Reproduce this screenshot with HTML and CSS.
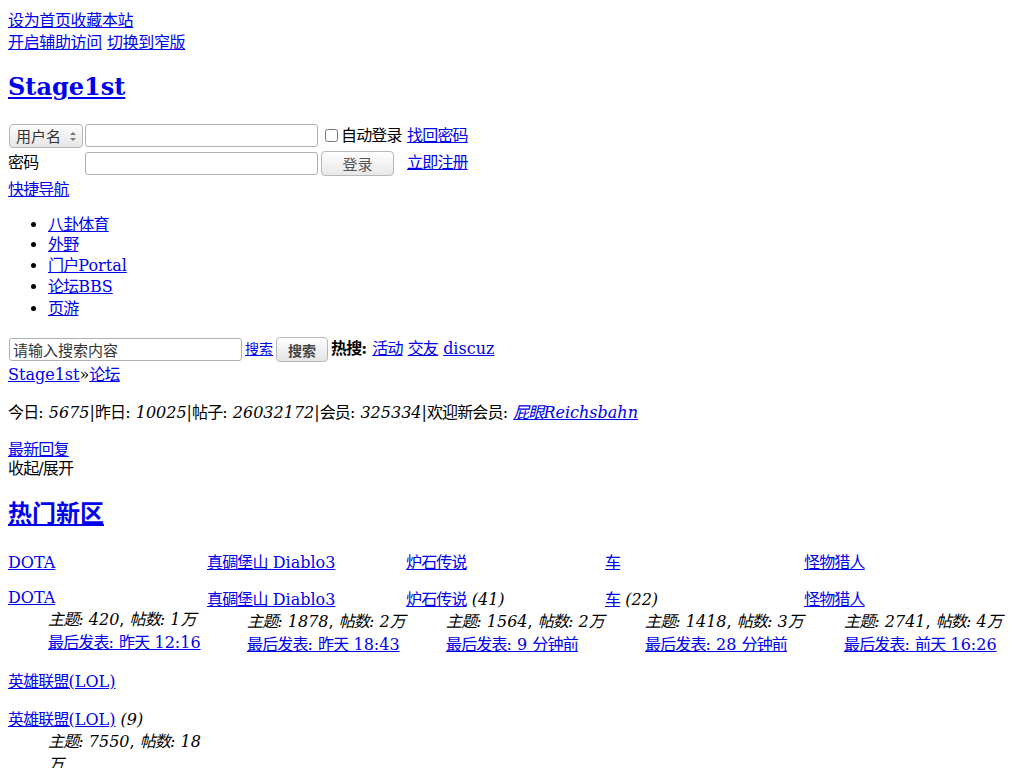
FILE: index.html
```html
<!DOCTYPE html>
<html lang="zh-CN">
<head>
<meta charset="utf-8">
<title>论坛 - Stage1st</title>
<link rel="stylesheet" href="styles.css">
</head>
<body>
<div class="toplinks first"><a href="#"><span class="z">设为首页</span></a><a href="#"><span class="z">收藏本站</span></a></div>
<div class="toplinks"><a href="#"><span class="z">开启辅助访问</span></a> <a href="#"><span class="z">切换到窄版</span></a></div>
<h2 class="logo"><a href="#">Stage1st</a></h2>

<table class="login">
  <tr class="r1">
    <td class="c1"><span class="selwrap"><select class="sel"><option>用户名</option></select><span class="arrows"><i class="up"></i><i class="dn"></i></span></span></td>
    <td class="c2"><input class="px" type="text"></td>
    <td class="c3"><label class="auto"><input type="checkbox" class="cb"><span class="z">自动登录</span></label></td>
    <td class="c4">&nbsp;<a href="#"><span class="z">找回密码</span></a></td>
  </tr>
  <tr class="r2">
    <td class="c1"><label class="pwl z">密码</label></td>
    <td class="c2"><input class="px" type="password"></td>
    <td class="c3"><button class="btn-login" type="button">登录</button></td>
    <td class="c4">&nbsp;<a href="#"><span class="z">立即注册</span></a></td>
  </tr>
</table>
<div class="quick"><a href="#"><span class="z">快捷导航</span></a></div>

<ul class="nav">
  <li class="n20"><a href="#"><span class="z">八卦体育</span></a></li>
  <li class="n20"><a href="#"><span class="z">外野</span></a></li>
  <li class="n21"><a href="#"><span class="z">门户</span>Portal</a></li>
  <li class="n22"><a href="#"><span class="z">论坛</span>BBS</a></li>
  <li class="n22"><a href="#"><span class="z">页游</span></a></li>
</ul>

<div class="search">
  <input class="skw" type="text" value="请输入搜索内容"><a class="slink" href="#">搜索</a><button class="btn-search" type="button">搜索</button><strong class="hot"><span class="z">热搜</span>:</strong> <a href="#"><span class="z">活动</span></a> <a href="#"><span class="z">交友</span></a> <a href="#">discuz</a>
</div>
<div class="crumb"><a href="#">Stage1st</a>»<a href="#"><span class="z">论坛</span></a></div>

<p class="stats"><span class="z">今日</span>: <em>5675</em>|<span class="z">昨日</span>: <em>10025</em>|<span class="z">帖子</span>: <em>26032172</em>|<span class="z">会员</span>: <em>325334</em>|<span class="z">欢迎新会员</span>: <em><a href="#"><span class="z">屁眼</span>Reichsbahn</a></em></p>

<p class="latest"><a href="#"><span class="z">最新回复</span></a><br><span class="z">收起/展开</span></p>

<h2 class="cat"><a href="#">热门新区</a></h2>

<table class="fl">
  <tr class="row1">
    <td class="fl-g">
      <div class="icn"><a href="#">DOTA</a></div>
      <dl class="first"><dt><a href="#">DOTA</a></dt><dd class="nw"><em><span class="z">主题</span>: 420</em>, <em><span class="z">帖数</span>: 1<span class="z">万</span></em></dd><dd><a href="#"><span class="z">最后发表</span>: <span class="z">昨天</span> 12:16</a></dd></dl>
    </td>
    <td class="fl-g">
      <div class="icn"><a href="#"><span class="z">真碉堡山</span> Diablo3</a></div>
      <dl><dt><a href="#"><span class="z">真碉堡山</span> Diablo3</a></dt><dd class="nw"><em><span class="z">主题</span>: 1878</em>, <em><span class="z">帖数</span>: 2<span class="z">万</span></em></dd><dd><a href="#"><span class="z">最后发表</span>: <span class="z">昨天</span> 18:43</a></dd></dl>
    </td>
    <td class="fl-g">
      <div class="icn"><a href="#"><span class="z">炉石传说</span></a></div>
      <dl><dt><a href="#"><span class="z">炉石传说</span></a> <em>(41)</em></dt><dd class="nw"><em><span class="z">主题</span>: 1564</em>, <em><span class="z">帖数</span>: 2<span class="z">万</span></em></dd><dd><a href="#"><span class="z">最后发表</span>: 9 <span class="z">分钟前</span></a></dd></dl>
    </td>
    <td class="fl-g">
      <div class="icn"><a href="#"><span class="z">车</span></a></div>
      <dl><dt><a href="#"><span class="z">车</span></a> <em>(22)</em></dt><dd class="nw"><em><span class="z">主题</span>: 1418</em>, <em><span class="z">帖数</span>: 3<span class="z">万</span></em></dd><dd><a href="#"><span class="z">最后发表</span>: 28 <span class="z">分钟前</span></a></dd></dl>
    </td>
    <td class="fl-g">
      <div class="icn"><a href="#"><span class="z">怪物猎人</span></a></div>
      <dl><dt><a href="#"><span class="z">怪物猎人</span></a></dt><dd class="nw"><em><span class="z">主题</span>: 2741</em>, <em><span class="z">帖数</span>: 4<span class="z">万</span></em></dd><dd><a href="#"><span class="z">最后发表</span>: <span class="z">前天</span> 16:26</a></dd></dl>
    </td>
  </tr>
  <tr class="row2">
    <td class="fl-g">
      <div class="icn"><a href="#"><span class="z">英雄联盟</span>(LOL)</a></div>
      <dl><dt><a href="#"><span class="z">英雄联盟</span>(LOL)</a> <em>(9)</em></dt><dd><em><span class="z">主题</span>: 7550</em>, <em><span class="z">帖数</span>: 18 <span class="z">万</span></em></dd><dd><a href="#"><span class="z">最后发表</span>: 1 <span class="z">分钟前</span></a></dd></dl>
    </td>
    <td class="fl-g"></td>
    <td class="fl-g"></td>
    <td class="fl-g"></td>
    <td class="fl-g"></td>
  </tr>
</table>
</body>
</html>
```

FILE: styles.css
```css
body {
  margin: 8px;
  font-family: "DejaVu Serif", "Noto Sans CJK SC", serif;
  font-size: 16px;
  line-height: 22px;
  color: #000;
  background: #fff;
}
a { color: #0000ee; }
.z { letter-spacing: -0.85px; }

.toplinks { height: 22px; }
.toplinks.first { padding-top: 2px; }
.toplinks .z { letter-spacing: -0.35px; }

h2 { font-size: 24px; font-weight: bold; margin: 20px 0; }
.logo { line-height: 30px; margin-top: 18px; }

.login { border-collapse: collapse; border-spacing: 0; }
.login td { padding: 0; vertical-align: middle; }
.login .r1 td { height: 27px; }
.login .r2 td { height: 28px; }
.login .c1 { width: 76px; }
.login .c3 { width: 81px; white-space: nowrap; }

.selwrap { position: relative; display: inline-block; margin-left: 1px; vertical-align: middle; }
.sel {
  -webkit-appearance: none;
  appearance: none;
  display: block;
  width: 74px;
  height: 24px;
  box-sizing: border-box;
  margin: 0;
  padding: 0 0 0 6px;
  border: 1px solid #b4b4b4;
  border-radius: 4px;
  background: linear-gradient(#fdfdfd, #e6e6e6);
  font-family: "Noto Sans CJK SC", sans-serif;
  font-size: 15px;
  color: #333;
}
.arrows { position: absolute; right: 7px; top: 8px; width: 6px; height: 10px; }
.arrows i { position: absolute; left: 0; width: 0; height: 0; border-left: 3px solid transparent; border-right: 3px solid transparent; }
.arrows .up { top: 0; border-bottom: 3px solid #777; }
.arrows .dn { top: 6px; border-top: 3px solid #777; }

.px {
  width: 233px;
  height: 23px;
  box-sizing: border-box;
  margin: 0 3px 0 1px;
  border: 1px solid #b0b0b0;
  border-radius: 3px;
  padding: 1px 4px;
  font-size: 14px;
  vertical-align: middle;
  background: #fff;
}
.auto { white-space: nowrap; }
.cb { margin: 0 3px 0 4px; width: 13px; height: 13px; vertical-align: -1px; }

.btn-login {
  width: 73px;
  height: 25px;
  margin: 0;
  padding: 0;
  border: 1px solid #b8b8b8;
  border-radius: 4px;
  background: linear-gradient(#fefefe, #e8e8e8);
  font-family: "Noto Sans CJK SC", sans-serif;
  font-size: 15px;
  color: #555;
  vertical-align: middle;
}

.quick { height: 22px; padding-top: 2px; }

.nav { margin: 14px 0 15px; padding-left: 40px; }
.nav .n20 { line-height: 20px; }
.nav .n21 { line-height: 21px; }
.nav .n22 { line-height: 22px; }

.search { height: 27px; line-height: 27px; white-space: nowrap; }
.skw {
  width: 233px;
  height: 23px;
  box-sizing: border-box;
  margin: 0 0 0 1px;
  padding: 1px 3px;
  border: 1px solid #b0b0b0;
  border-radius: 3px;
  font-family: "Noto Sans CJK SC", sans-serif;
  font-size: 15px;
  color: #333;
  vertical-align: middle;
}
.slink { margin-left: 3px; font-family: "Noto Sans CJK SC", sans-serif; font-size: 14px; }
.btn-search {
  width: 52px;
  height: 25px;
  margin: 0 0 0 3px;
  padding: 0;
  border: 1px solid #b8b8b8;
  border-radius: 4px;
  background: linear-gradient(#fefefe, #e4e4e4);
  font-family: "Noto Sans CJK SC", sans-serif;
  font-size: 14px;
  font-weight: bold;
  color: #444;
  vertical-align: middle;
}
.hot { margin-left: 3px; }

.crumb { height: 22px; padding-top: 2px; }

.stats { margin: 16px 0 16px; }
.latest { margin: 14px 0 16px; line-height: 19px; }

.cat { line-height: 30px; margin: 21px 0 23px; }

.fl { border-collapse: collapse; border-spacing: 0; }
.fl td { padding: 0; width: 199px; vertical-align: top; }
.icn { height: 22px; }
.fl dl { margin: 15px 0 15px; }
.fl dl.first { margin-top: 13px; }
.fl .row2 dl { margin-top: 16px; }
.fl dt { line-height: 21px; }
.fl dd { margin-left: 40px; line-height: 23px; }
.fl dd.nw { white-space: nowrap; }
```
